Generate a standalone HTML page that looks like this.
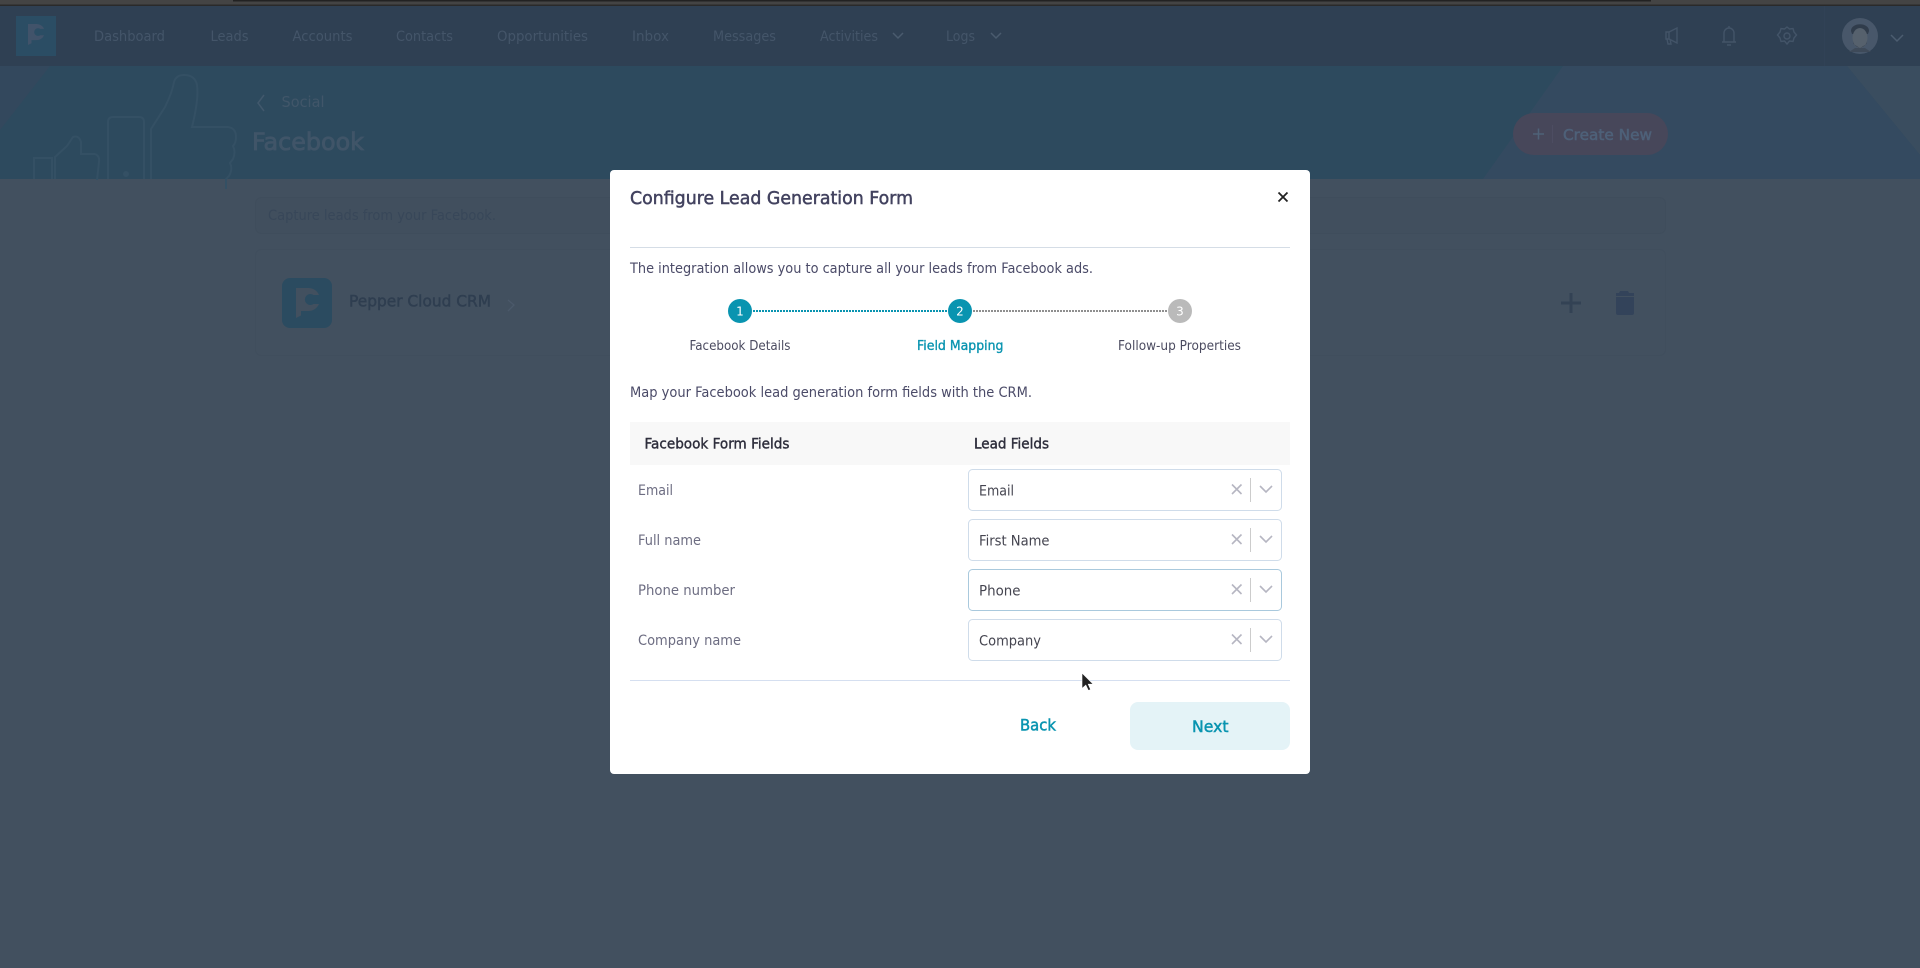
<!DOCTYPE html>
<html lang="en"><head><meta charset="utf-8"><title>Configure Lead Generation Form</title>
<style>
html,body{margin:0;padding:0;background:#42505f;width:1920px;height:968px;overflow:hidden}
svg{display:block}
text{font-family:"DejaVu Sans","Liberation Sans",sans-serif;font-size:14px}
.nav{fill:#445569;font-size:14px}
.b{stroke-width:.5px}
.t{fill:#4b4b68;font-size:14px}
.l{fill:#6d6d82;font-size:14px}
.s{fill:#454550;font-size:14px}
.lab{fill:#4b4b60;font-size:13px}
.x{stroke:#b6b6c2;stroke-width:1.6;fill:none}
</style></head><body>
<svg xmlns="http://www.w3.org/2000/svg" width="1920" height="968" viewBox="0 0 1920 968">
<rect width="1920" height="968" fill="#42505f"/>
<!-- top chrome -->
<rect width="1920" height="6" fill="#444"/>
<rect x="233" width="1418" height="1.5" fill="#222"/>
<rect y="4.500" width="1920" height="1.500" fill="#2a2a2a"/>
<!-- nav -->
<rect y="6" width="1920" height="60" fill="#2f4053"/>
<rect x="16" y="16" width="40" height="40" fill="#2b4d64"/>
<path transform="translate(28 24) scale(.7) translate(-296 -288)" d="M296 288H308A11.500 11.500 0 0 1 319 295H313.500A5.500 5.500 0 1 0 313.500 304H319A11.500 11.500 0 0 1 308 311H301V315.500L296 318Z" fill="#41536a"/>
<text class="nav" x="94" y="41" textLength="71" lengthAdjust="spacingAndGlyphs">Dashboard</text>
<text class="nav" x="210.500" y="41" textLength="38" lengthAdjust="spacingAndGlyphs">Leads</text>
<text class="nav" x="292.500" y="41" textLength="60" lengthAdjust="spacingAndGlyphs">Accounts</text>
<text class="nav" x="396" y="41" textLength="57" lengthAdjust="spacingAndGlyphs">Contacts</text>
<text class="nav" x="497" y="41" textLength="91" lengthAdjust="spacingAndGlyphs">Opportunities</text>
<text class="nav" x="632" y="41" textLength="37" lengthAdjust="spacingAndGlyphs">Inbox</text>
<text class="nav" x="713" y="41" textLength="63" lengthAdjust="spacingAndGlyphs">Messages</text>
<text class="nav" x="820" y="41" textLength="58" lengthAdjust="spacingAndGlyphs">Activities</text>
<text class="nav" x="946" y="41" textLength="29" lengthAdjust="spacingAndGlyphs">Logs</text>
<path d="M893 33l5 5 5-5M991 33l5 5 5-5" stroke="#4a5b6e" stroke-width="1.500" fill="none"/>
<!-- nav icons -->
<g stroke="#435468" stroke-width="1.400" fill="none">
<path d="M1666 32h3l8-4v15l-8-4h-3zM1669 32v7M1667 39l1 5h3l-1-5"/>
<path d="M1724 42v-9a5 5 0 0 1 10 0v9zM1722 42h14M1727 45h4M1729 26v2"/>
<circle cx="1787" cy="36" r="3"/>
<path d="M1787 27l2.500 2 3.500-.5 1 3.500 2.500 3-2.500 3-1 3.500-3.500-.5-2.500 3-2.500-3-3.500.5-1-3.500-2.500-3 2.500-3 1-3.500 3.500.5z"/>
</g>
<rect x="1824" y="6" width="1" height="60" fill="#314256"/>
<circle cx="1860" cy="36" r="18" fill="#48576a"/>
<path d="M1851 31c0-9 18-9 18 0l-1 3h-16z" fill="#303c4b"/>
<ellipse cx="1860" cy="38" rx="7.500" ry="10" fill="#56616d"/>
<path d="M1852.500 38c1 13 14 13 15 0l-1 6-6.500 4-6.500-4z" fill="#3c4654"/>
<path d="M1849 52h22l-6-4h-10z" fill="#3e4a59"/>
<path d="M1891 35l6 6 6-6" stroke="#4c5d70" stroke-width="1.500" fill="none"/>
<!-- banner -->
<rect y="66" width="1920" height="113" fill="#2d4a5e"/>
<polygon points="0,66 50,66 0,130" fill="#33485d"/>
<polygon points="1563,66 1847,66 1920,155 1920,179 1483,179" fill="#344a60"/>
<polygon points="1847,66 1920,66 1920,155" fill="#3a4d5f"/>
<g stroke="#345064" stroke-width="2" fill="none">
<path d="M108 179V122q0-5 5-5h26q5 0 5 5v57"/>
<path d="M151 179v-50l14-22q7-14 9-25 2-7 10-7 11 0 13 10 2 14-5 42h36q8 1 8 10 0 6-3 9 3 6 0 13l-3 4q3 6-1 13l-3 3 0 10"/>
<path d="M34 179v-21h18v21M55 179v-22l12-11 6-9q6-2 8 5v12h14q5 2 4 8l-2 18"/>
<circle cx="126" cy="174" r="3" fill="#345064" stroke="none"/>
</g>
<path d="M264 95l-6 8 6 8" stroke="#41586c" stroke-width="1.500" fill="none"/>
<text x="281.500" y="107" fill="#415669" style="font-size:15px" textLength="43" lengthAdjust="spacingAndGlyphs">Social</text>
<text x="252" y="150" fill="#405568" stroke="#405568" class="b" style="font-size:24px;stroke-width:.8px" textLength="112" lengthAdjust="spacingAndGlyphs">Facebook</text>
<rect x="1513" y="113" width="155" height="42" rx="21" fill="#47475a"/>
<path d="M1533 134h11M1538.500 128.500v11" stroke="#4f6278" stroke-width="1.500" fill="none"/>
<rect x="1552" y="125" width="1" height="18" fill="#4d4d62"/>
<text x="1563" y="140" fill="#4e6179" stroke="#4e6179" class="b" style="font-size:15.5px" textLength="89" lengthAdjust="spacingAndGlyphs">Create New</text>
<!-- content -->
<rect x="255.500" y="197.500" width="1410" height="36" rx="6" fill="#414f5e" stroke="#3f4d5c"/>
<text x="268" y="220" fill="#384759" style="font-size:14px" textLength="228" lengthAdjust="spacingAndGlyphs">Capture leads from your Facebook.</text>
<rect x="255.500" y="249.500" width="1410" height="106" rx="6" fill="#42505f" stroke="#404e5d"/>
<rect x="282" y="278" width="50" height="50" rx="8" fill="#2b4b60"/>
<path d="M296 288H308A11.500 11.500 0 0 1 319 295H313.500A5.500 5.500 0 1 0 313.500 304H319A11.500 11.500 0 0 1 308 311H301V315.500L296 318Z" fill="#42505f"/>
<text x="349" y="306.500" fill="#2f3e50" stroke="#2f3e50" class="b" style="font-size:16px" textLength="142" lengthAdjust="spacingAndGlyphs">Pepper Cloud CRM</text>
<path d="M508 300l6 5-6 6" stroke="#4b596a" stroke-width="1.300" fill="none"/>
<path d="M1561 303h20M1571 293v20" stroke="#334254" stroke-width="3" fill="none"/>
<path d="M1620 291h8l1 2h5v3h-18v-3h3z" fill="#33435a"/>
<path d="M1616 297h18v16a2 2 0 0 1-2 2h-14a2 2 0 0 1-2-2z" fill="#33435a"/>
<!-- modal -->
<rect x="610" y="170" width="700" height="604" rx="4" fill="#fff"/>
<text x="630" y="204" fill="#42425f" stroke="#42425f" class="b" style="font-size:18px" textLength="283" lengthAdjust="spacingAndGlyphs">Configure Lead Generation Form</text>
<path d="M1278.500 192.500l9 9M1287.500 192.500l-9 9" stroke="#222" stroke-width="1.800" fill="none"/>
<rect x="630" y="247" width="660" height="1" fill="#d5dde6"/>
<text class="t" x="630" y="273" textLength="463" lengthAdjust="spacingAndGlyphs">The integration allows you to capture all your leads from Facebook ads.</text>
<!-- stepper -->
<line x1="753" y1="311" x2="947" y2="311" stroke="#0994b0" stroke-width="2" stroke-dasharray="2 1"/>
<line x1="973" y1="311" x2="1167" y2="311" stroke="#8f8f8f" stroke-width="2" stroke-dasharray="2 1"/>
<circle cx="740" cy="311" r="12" fill="#0994b0"/>
<circle cx="960" cy="311" r="12" fill="#0994b0"/>
<circle cx="1180" cy="311" r="12" fill="#bababa"/>
<text x="740" y="315.500" fill="#fff" text-anchor="middle" style="font-size:12px">1</text>
<text x="960" y="315.500" fill="#fff" text-anchor="middle" style="font-size:12px">2</text>
<text x="1180" y="315.500" fill="#fff" text-anchor="middle" style="font-size:12px">3</text>
<text class="lab" x="689.500" y="350" textLength="101" lengthAdjust="spacingAndGlyphs">Facebook Details</text>
<text class="lab b" x="917" y="350" stroke="#0994b0" style="fill:#0994b0;stroke-width:.35px" textLength="86.500" lengthAdjust="spacingAndGlyphs">Field Mapping</text>
<text class="lab" x="1118" y="350" textLength="123" lengthAdjust="spacingAndGlyphs">Follow-up Properties</text>
<text class="t" x="630" y="397" textLength="402" lengthAdjust="spacingAndGlyphs">Map your Facebook lead generation form fields with the CRM.</text>
<!-- table -->
<rect x="630" y="422" width="660" height="43" fill="#f8f8f8"/>
<text x="644.500" y="448.500" fill="#2e2e3c" stroke="#2e2e3c" class="b" style="font-size:14px;stroke-width:.4px" textLength="145" lengthAdjust="spacingAndGlyphs">Facebook Form Fields</text>
<text x="974" y="448.500" fill="#2e2e3c" stroke="#2e2e3c" class="b" style="font-size:14px;stroke-width:.4px" textLength="75" lengthAdjust="spacingAndGlyphs">Lead Fields</text>
<text class="l" x="638" y="495" textLength="35" lengthAdjust="spacingAndGlyphs">Email</text>
<text class="l" x="638" y="545" textLength="63" lengthAdjust="spacingAndGlyphs">Full name</text>
<text class="l" x="638" y="595" textLength="97" lengthAdjust="spacingAndGlyphs">Phone number</text>
<text class="l" x="638" y="645" textLength="103" lengthAdjust="spacingAndGlyphs">Company name</text>
<!-- selects -->
<g fill="#fff" stroke="#cfdcea">
<rect x="968.500" y="469.500" width="313" height="41" rx="4"/>
<rect x="968.500" y="519.500" width="313" height="41" rx="4"/>
<rect x="968.500" y="569.500" width="313" height="41" rx="4" stroke="#a9c9dd"/>
<rect x="968.500" y="619.500" width="313" height="41" rx="4"/>
</g>
<text class="s" x="979" y="495.500" textLength="35" lengthAdjust="spacingAndGlyphs">Email</text>
<text class="s" x="979" y="545.500" textLength="70.500" lengthAdjust="spacingAndGlyphs">First Name</text>
<text class="s" x="979" y="595.500" textLength="41.500" lengthAdjust="spacingAndGlyphs">Phone</text>
<text class="s" x="979" y="645.500" textLength="62" lengthAdjust="spacingAndGlyphs">Company</text>
<g class="x">
<path d="M1232 484.500l9.500 9.500M1241.500 484.500l-9.500 9.500M1260 486l6 6 6-6"/>
<path d="M1232 534.500l9.500 9.500M1241.500 534.500l-9.500 9.500M1260 536l6 6 6-6"/>
<path d="M1232 584.500l9.500 9.500M1241.500 584.500l-9.500 9.500M1260 586l6 6 6-6"/>
<path d="M1232 634.500l9.500 9.500M1241.500 634.500l-9.500 9.500M1260 636l6 6 6-6"/>
</g>
<g fill="#ccc">
<rect x="1250" y="478" width="1" height="24"/>
<rect x="1250" y="528" width="1" height="24"/>
<rect x="1250" y="578" width="1" height="24"/>
<rect x="1250" y="628" width="1" height="24"/>
</g>
<rect x="630" y="680" width="660" height="1" fill="#d5dff0"/>
<rect x="1130" y="702" width="160" height="48" rx="8" fill="#e4f3f7"/>
<text x="1020" y="730.500" fill="#0994b0" stroke="#0994b0" class="b" style="font-size:16px" textLength="36" lengthAdjust="spacingAndGlyphs">Back</text>
<text x="1192" y="732" fill="#0994b0" stroke="#0994b0" class="b" style="font-size:16px" textLength="36.500" lengthAdjust="spacingAndGlyphs">Next</text>
<!-- cursor -->
<path d="M1082 673v15.500l3.800-3.400 2.600 5.400 2.200-1-2.400-5.300h5z" fill="#222" stroke="#fff" stroke-width=".6"/>
</svg>
</body></html>
